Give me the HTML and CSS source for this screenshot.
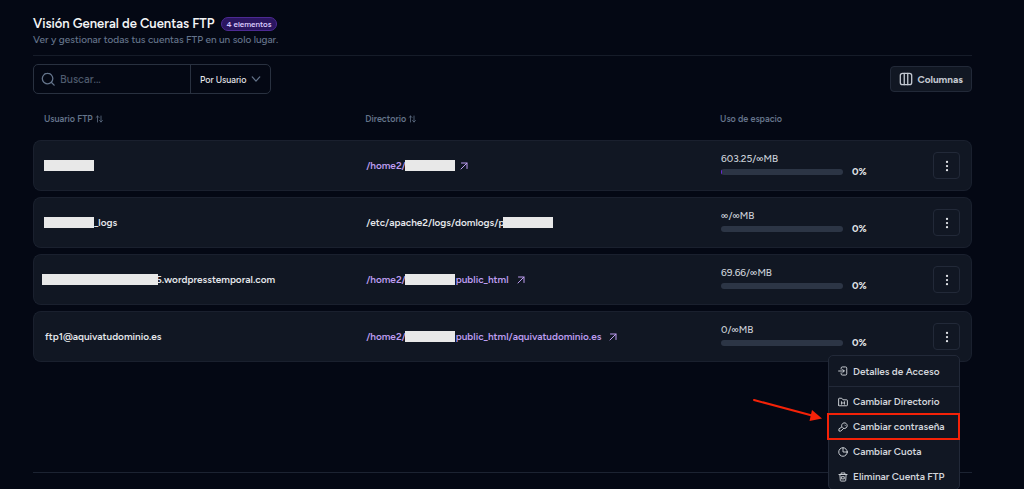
FILE: index.html
```html
<!DOCTYPE html>
<html lang="es">
<head>
  <meta charset="UTF-8">
  <meta name="viewport" content="width=device-width, initial-scale=1">
  <title>Cuentas FTP</title>
  <link rel="stylesheet" href="styles.css">
</head>
<body>

<!-- Iconos compartidos -->
<svg class="sprite" aria-hidden="true">
  <symbol id="i-sort" viewBox="0 0 16 16">
    <path d="M5 14V2M2 5l3-3 3 3M12 2v12M9 11l3 3 3-3"/>
  </symbol>
  <symbol id="i-out" viewBox="0 0 16 16">
    <path d="M2 14L14 2M3 2h11v11"/>
  </symbol>
  <symbol id="i-dots" viewBox="0 0 16 16">
    <circle cx="8" cy="2.500" r="1.500"/><circle cx="8" cy="8" r="1.500"/><circle cx="8" cy="13.500" r="1.500"/>
  </symbol>
</svg>

<main class="page">
  <header class="head">
    <div class="head-title">
      <h1>Visión General de Cuentas FTP</h1>
      <span class="badge">4 elementos</span>
    </div>
    <p>Ver y gestionar todas tus cuentas FTP en un solo lugar.</p>
  </header>

  <div class="toolbar">
    <div class="search">
      <svg class="search-icon" viewBox="0 0 16 16"><circle cx="7.500" cy="7.500" r="6"/><path d="M12 12l3 3"/></svg>
      <input type="text" placeholder="Buscar..." aria-label="Buscar">
      <div class="filter">
        <select aria-label="Filtrar">
          <option>Por Usuario</option>
          <option>Por Directorio</option>
        </select>
        <svg class="chevron" viewBox="0 0 12 12"><path d="M1.500 3.500L6 8.500l4.500-5"/></svg>
      </div>
    </div>
    <button class="columns" type="button">
      <svg viewBox="0 0 16 16"><rect x="1.500" y="1.500" width="13" height="13" rx="2.500"/><path d="M6 1.500v13M10 1.500v13"/></svg>
      Columnas
    </button>
  </div>

  <div class="list">
    <table>
      <colgroup>
        <col class="col-user">
        <col class="col-dir">
        <col class="col-usage">
        <col class="col-actions">
      </colgroup>
      <thead>
        <tr>
          <th>Usuario FTP <svg class="sort"><use href="#i-sort"/></svg></th>
          <th>Directorio <svg class="sort"><use href="#i-sort"/></svg></th>
          <th>Uso de espacio</th>
          <td></td>
        </tr>
      </thead>
      <tbody>
        <tr>
          <td><div class="cell"><span class="mask"></span></div></td>
          <td><a class="cell" href="#">/home2/<span class="mask"></span><svg class="out near"><use href="#i-out"/></svg></a></td>
          <td>
            <div class="usage">603.25/∞MB</div>
            <div class="meter"><div class="track"><div class="fill"></div></div>0%</div>
          </td>
          <td class="actions"><button class="more" type="button" aria-label="Acciones"><svg><use href="#i-dots"/></svg></button></td>
        </tr>
        <tr>
          <td><div class="cell"><span class="mask"></span>_logs</div></td>
          <td><div class="cell">/etc/apache2/logs/domlogs/p<span class="mask over"></span></div></td>
          <td>
            <div class="usage">∞/∞MB</div>
            <div class="meter"><div class="track"></div>0%</div>
          </td>
          <td class="actions"><button class="more" type="button" aria-label="Acciones"><svg><use href="#i-dots"/></svg></button></td>
        </tr>
        <tr>
          <td><div class="cell"><span class="mask long"></span>5.wordpresstemporal.com</div></td>
          <td><a class="cell" href="#">/home2/<span class="mask"></span>public_html<svg class="out"><use href="#i-out"/></svg></a></td>
          <td>
            <div class="usage">69.66/∞MB</div>
            <div class="meter"><div class="track"></div>0%</div>
          </td>
          <td class="actions"><button class="more" type="button" aria-label="Acciones"><svg><use href="#i-dots"/></svg></button></td>
        </tr>
        <tr>
          <td><div class="cell">ftp1@aquivatudominio.es</div></td>
          <td><a class="cell" href="#">/home2/<span class="mask"></span>public_html/aquivatudominio.es<svg class="out"><use href="#i-out"/></svg></a></td>
          <td>
            <div class="usage">0/∞MB</div>
            <div class="meter"><div class="track"></div>0%</div>
          </td>
          <td class="actions">
            <div class="dropdown">
              <button class="more" type="button" aria-label="Acciones"><svg><use href="#i-dots"/></svg></button>
              <div class="menu">
                <button type="button" class="first">
                  <svg viewBox="0 0 16 16"><path d="M5 5V3.500A2 2 0 0 1 7 1.500h5a2 2 0 0 1 2 2v9a2 2 0 0 1-2 2H7a2 2 0 0 1-2-2V11M1 8h9M7.500 5.500L10 8l-2.500 2.500"/></svg>
                  Detalles de Acceso
                </button>
                <button type="button">
                  <svg viewBox="0 0 16 16"><path d="M1 13V3a1 1 0 0 1 1-1h4l2 2.500h6a1 1 0 0 1 1 1V13a1 1 0 0 1-1 1H2a1 1 0 0 1-1-1zM5.500 7.500v4M10.500 7.500v4M8 8.500v2"/></svg>
                  Cambiar Directorio
                </button>
                <button type="button" class="marked">
                  <svg viewBox="0 0 16 16"><path d="M6 7.500A4.500 4.500 0 1 1 9 10.200L4.500 14.500h-3v-3zM9 10.200L7.500 9"/><path d="M11 5l.5.500"/></svg>
                  Cambiar contraseña
                  <svg class="arrow" viewBox="0 0 72 28"><path class="line" d="M2 3L60 18.500"/><path class="tip" d="M60 13l10 8.500L57.500 24z"/></svg>
                </button>
                <button type="button">
                  <svg viewBox="0 0 16 16"><circle cx="8" cy="8" r="6.800"/><path d="M8 1.200V8h6.800"/></svg>
                  Cambiar Cuota
                </button>
                <button type="button">
                  <svg viewBox="0 0 16 16"><path d="M1.500 4h13M5 4V1.500h6V4M3 4l.7 9.500a1 1 0 0 0 1 1h6.600a1 1 0 0 0 1-1L13 4M6 7.500h4v3.500H6z"/></svg>
                  Eliminar Cuenta FTP
                </button>
              </div>
            </div>
          </td>
        </tr>
      </tbody>
    </table>
  </div>
</main>

</body>
</html>
```

FILE: styles.css
```css
* {
  box-sizing: border-box;
}
body {
  margin: 0;
  min-height: 100vh;
  overflow: hidden;
  background: #040814;
  color: #e5e7eb;
  font-family: Figtree, Lato, "Open Sans", sans-serif;
  font-size: 10px;
  font-weight: 500;
}
svg {
  fill: none;
  stroke: currentColor;
  stroke-width: 1.5;
  stroke-linecap: round;
  stroke-linejoin: round;
  flex-shrink: 0;
}
.sprite {
  position: absolute;
  width: 0;
  height: 0;
}
button,
input,
select {
  font: inherit;
  color: inherit;
}
button {
  cursor: pointer;
}
.page {
  margin: 0 52px 0 33px;
  padding-top: 16px;
}

/* Cabecera */
.head {
  padding-bottom: 7px;
  border-bottom: 1px solid #161c29;
}
.head-title {
  display: flex;
  align-items: center;
  gap: 6px;
}
h1 {
  margin: 0;
  font-size: 13px;
  line-height: 16px;
  font-weight: 600;
  color: #f3f4f6;
}
.badge {
  padding: 0 5px;
  border: 1px solid #4c2a92;
  border-radius: 7px;
  background: #2b1660;
  color: #d9c8fb;
  font-size: 8px;
  font-weight: 600;
  line-height: 12px;
}
.head p {
  margin: 0;
  line-height: 16px;
  color: #64748b;
}

/* Buscador y columnas */
.toolbar {
  display: flex;
  justify-content: space-between;
  align-items: center;
  padding-top: 8px;
}
.search {
  display: flex;
  align-items: center;
  height: 30px;
  border: 1px solid #293140;
  border-radius: 5px;
}
.search-icon {
  width: 14px;
  height: 14px;
  margin-left: 7px;
  color: #64748b;
}
.search input {
  width: 135px;
  padding: 0 5px;
  border: 0;
  outline: 0;
  background: transparent;
  font-size: 11px;
}
.search input::placeholder {
  color: #4f5b6e;
  opacity: 1;
}
.filter {
  display: flex;
  align-items: center;
  align-self: stretch;
  position: relative;
  border-left: 1px solid #293140;
}
.filter select {
  appearance: none;
  width: 79px;
  height: 28px;
  padding: 0 20px 0 9px;
  border: 0;
  background: transparent;
  font-size: 9px;
}
.chevron {
  position: absolute;
  right: 9px;
  width: 10px;
  height: 10px;
  color: #64748b;
  pointer-events: none;
}
.columns {
  display: flex;
  align-items: center;
  gap: 4px;
  height: 26px;
  padding: 0 8px;
  border: 1px solid #222938;
  border-radius: 4px;
  background: #111723;
  color: #c3c8d1;
  font-weight: 700;
}
.columns svg {
  width: 14px;
  height: 14px;
}

/* Tabla */
.list {
  min-height: 379px;
  border-bottom: 1px solid #1c2332;
}
table {
  width: 100%;
  table-layout: fixed;
  border-collapse: separate;
  border-spacing: 0 6px;
}
.col-user {
  width: 34.2%;
}
.col-dir {
  width: 37.8%;
}
.col-usage {
  width: 20%;
}
th {
  height: 34px;
  padding: 3px 12px 0 11px;
  text-align: left;
  font-size: 9px;
  font-weight: 600;
  color: #64748b;
}
.sort {
  width: 8px;
  height: 8px;
  vertical-align: -1px;
}
tbody td {
  height: 51px;
  padding: 0 12px;
  border: 1px solid #1a202e;
  border-width: 1px 0;
  background: #111723;
}
tbody td:first-child {
  border-left-width: 1px;
  border-radius: 8px 0 0 8px;
  padding-left: 11px;
}
tbody td:last-child {
  border-right-width: 1px;
  border-radius: 0 8px 8px 0;
  padding-right: 11px;
}
.cell {
  display: flex;
  align-items: center;
  line-height: 14px;
  font-weight: 600;
  white-space: nowrap;
  text-decoration: none;
}
a.cell {
  color: #bd9df0;
}
.mask {
  width: 50px;
  height: 11px;
  background: #e8e8e8;
}
a.cell .mask {
  margin: 0 1px;
}
.cell > .mask:first-child {
  margin-left: -1px;
}
.cell > .mask.long {
  width: 116px;
  margin-left: -3px;
  margin-right: -2px;
  position: relative;
}
.mask.over {
  margin-left: -4px;
  position: relative;
}
.out {
  width: 8px;
  height: 8px;
  margin-left: 8px;
  stroke-width: 2;
}
.out.near {
  margin-left: 4px;
}
.usage {
  line-height: 14px;
  color: #cbd0d8;
}
.meter {
  display: flex;
  align-items: center;
  gap: 9px;
  margin-bottom: 2px;
  line-height: 12px;
  font-weight: 700;
}
.track {
  width: 122px;
  height: 6px;
  border-radius: 3px;
  background: #2c3545;
  overflow: hidden;
}
.fill {
  width: 1px;
  height: 6px;
  background: #6d28d9;
}
.actions {
  text-align: right;
}
.dropdown {
  display: inline-block;
  position: relative;
  vertical-align: middle;
}
.more {
  display: inline-flex;
  align-items: center;
  justify-content: center;
  width: 27px;
  height: 27px;
  padding: 0;
  border: 1px solid #222938;
  border-radius: 4px;
  background: transparent;
  vertical-align: middle;
}
.more svg {
  width: 12px;
  height: 12px;
  fill: currentColor;
  stroke: none;
}

/* Menú de acciones */
.menu {
  position: absolute;
  top: 32px;
  right: 0;
  width: 132px;
  border: 1px solid #222938;
  border-radius: 5px;
  background: #111723;
  z-index: 2;
}
.menu button {
  display: flex;
  align-items: center;
  gap: 5px;
  position: relative;
  width: 100%;
  height: 25px;
  padding: 0 9px;
  border: 0;
  background: transparent;
  color: #d1d5db;
  font-weight: 600;
  white-space: nowrap;
}
.menu svg {
  width: 10px;
  height: 10px;
}
.menu .first {
  height: 31px;
  margin-bottom: 2px;
  border-bottom: 1px solid #222938;
}
.menu .marked::after {
  content: "";
  position: absolute;
  inset: -1px -1px -1px -2px;
  border: 2px solid #f42208;
}
.menu .arrow {
  position: absolute;
  right: 135px;
  top: -17px;
  width: 72px;
  height: 28px;
  color: #f42208;
}
.arrow .line {
  stroke-width: 2;
}
.arrow .tip {
  fill: currentColor;
  stroke: none;
}
```
